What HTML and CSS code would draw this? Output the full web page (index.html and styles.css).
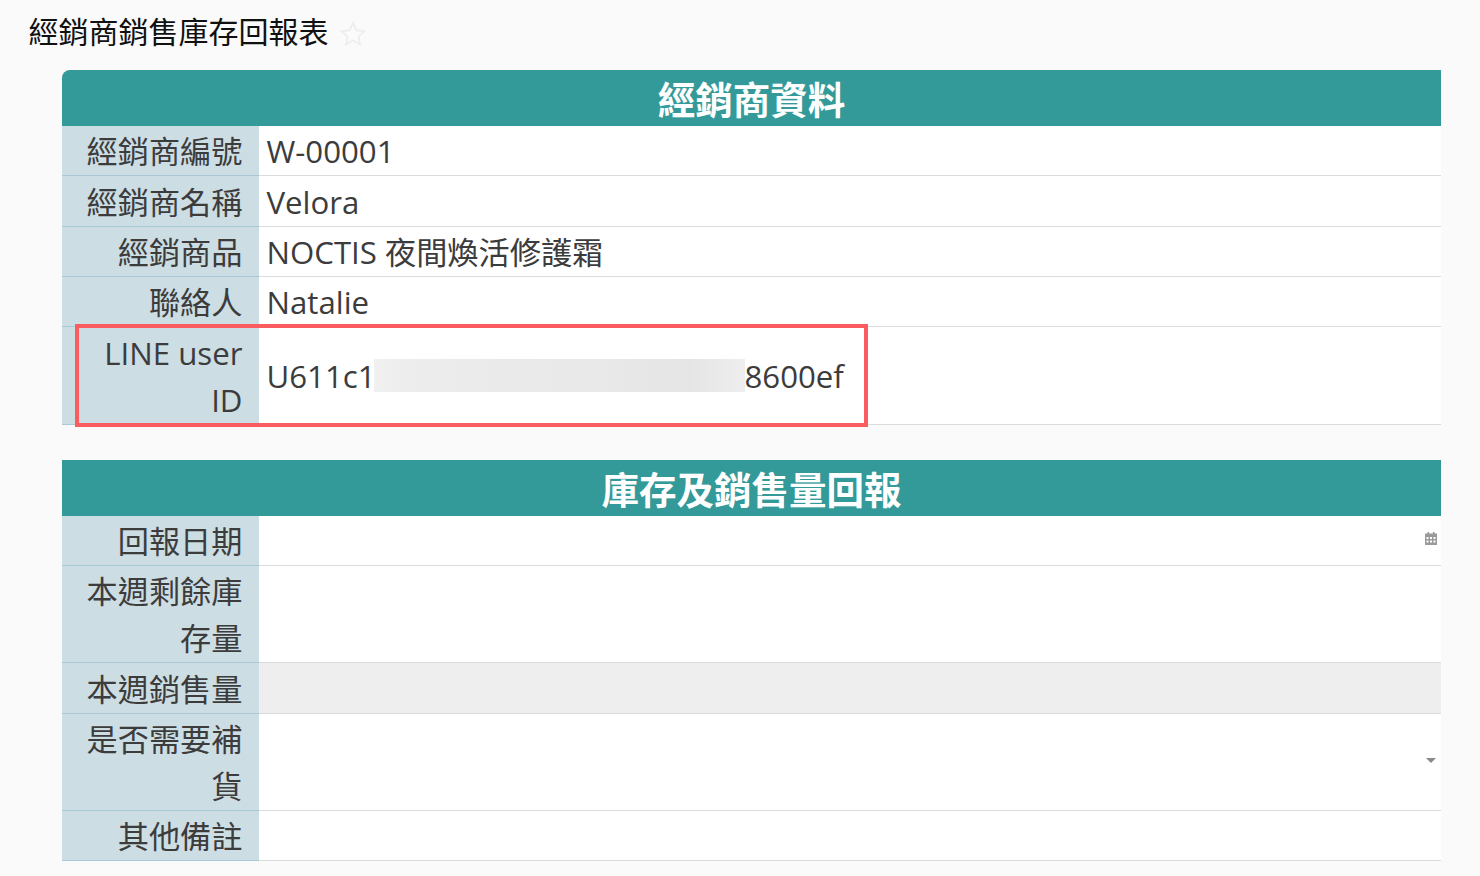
FILE: index.html
```html
<!DOCTYPE html>
<html lang="zh-Hant">
<head>
    <meta charset="UTF-8">
    <title>經銷商銷售庫存回報表</title>
    <link rel="stylesheet" href="styles.css">
</head>
<body>
    <header class="page-title">
        <h1>經銷商銷售庫存回報表</h1>
        <svg class="star" viewBox="0 0 24 24" width="28" height="28" aria-hidden="true">
            <path d="M12 2.6l2.9 6.2 6.8.8-5 4.6 1.3 6.7-6-3.4-6 3.4 1.3-6.7-5-4.6 6.8-.8z"/>
        </svg>
    </header>

    <main class="form">
        <!-- 經銷商資料 -->
        <section class="group group-first">
            <h2 class="group-title">經銷商資料</h2>
            <div class="row">
                <div class="label">經銷商編號</div>
                <div class="value">W-00001</div>
            </div>
            <div class="row">
                <div class="label">經銷商名稱</div>
                <div class="value">Velora</div>
            </div>
            <div class="row">
                <div class="label">經銷商品</div>
                <div class="value">NOCTIS 夜間煥活修護霜</div>
            </div>
            <div class="row">
                <div class="label">聯絡人</div>
                <div class="value">Natalie</div>
            </div>
            <div class="row row-highlight">
                <div class="label">LINE user ID</div>
                <div class="value">U611c1<span class="redacted"></span>8600ef</div>
                <div class="highlight-box"></div>
            </div>
        </section>

        <!-- 庫存及銷售量回報 -->
        <section class="group">
            <h2 class="group-title">庫存及銷售量回報</h2>
            <div class="row">
                <div class="label">回報日期</div>
                <div class="value value-icon">
                    <svg class="calendar" viewBox="0 0 12 13" width="12" height="13" aria-hidden="true">
                        <path d="M2.5 0h1.6v2H2.500zM7.900 0h1.600v2H7.900z"/>
                        <path fill-rule="evenodd" d="M0 1.500h12V13H0zM1.500 5v2h2V5zm3.500 0v2h2V5zm3.500 0v2h2V5zM1.500 8.500v2h2v-2zm3.500 0v2h2v-2zm3.500 0v2h2v-2z"/>
                    </svg>
                </div>
            </div>
            <div class="row">
                <div class="label">本週剩餘庫存量</div>
                <div class="value"></div>
            </div>
            <div class="row">
                <div class="label">本週銷售量</div>
                <div class="value value-disabled"></div>
            </div>
            <div class="row">
                <div class="label">是否需要補貨</div>
                <div class="value value-icon"><span class="caret"></span></div>
            </div>
            <div class="row">
                <div class="label">其他備註</div>
                <div class="value"></div>
            </div>
        </section>
    </main>
</body>
</html>
```

FILE: styles.css
```css
body {
    margin: 0;
    background-color: #fafafa;
    color: #3c3c3c;
    font-family: "Open Sans", "Noto Sans CJK TC", sans-serif;
}
.page-title {
    display: flex;
    align-items: center;
    height: 70.25px;
    padding: 0 0 6px 28.5px;
    box-sizing: border-box;
}
.page-title h1 {
    margin: 0;
    color: #111;
    font-size: 30px;
    font-weight: 400;
    line-height: 40px;
}
.star {
    margin: 4px 0 0 10px;
    fill: #fbfbfb;
    stroke: #eeeeee;
    stroke-width: 1.6;
}
.form {
    margin-left: 62px;
    width: 1379px;
}
.group {
    margin-bottom: 34.95px;
}
.group-title {
    margin: 0;
    height: 56px;
    background-color: #339a99;
    color: #fff;
    font-size: 37.5px;
    font-weight: 700;
    line-height: 60px;
    text-align: center;
}
.group-first .group-title {
    border-radius: 8px 0 0 0;
}
.row {
    display: grid;
    grid-template-columns: 196.5px 1fr;
    position: relative;
}
.label {
    background-color: #cdddE4;
    border-bottom: 1px solid #a9c8d8;
    padding: 2.2px 16px 0;
    font-size: 31.2px;
    line-height: 47px;
    text-align: right;
    box-sizing: border-box;
}
.row-highlight .label {
    padding-top: 3px;
}
.value {
    display: flex;
    align-items: center;
    background-color: #fff;
    border-bottom: 1px solid #dcdcdc;
    padding: 2px 8px 0;
    font-size: 31.2px;
    line-height: 47px;
    white-space: nowrap;
}
.value-disabled {
    background-color: #eeeeee;
}
.value-icon {
    justify-content: flex-end;
    padding-right: 4px;
    padding-bottom: 6px;
}
.redacted {
    display: inline-block;
    width: 371px;
    height: 33px;
    margin: -2px 0 0 -2px;
    background: linear-gradient(90deg, #f1f1f1 0%, #ececec 12%, #eaeaea 35%, #e9e9e9 60%, #e5e5e5 85%, #eeeeee 100%);
}
.highlight-box {
    position: absolute;
    top: -3px;
    left: 13px;
    width: 793px;
    height: 103px;
    box-sizing: border-box;
    border: 4px solid #fb5c5f;
}
.calendar {
    fill: #9a9a9a;
    display: block;
}
.caret {
    width: 0;
    height: 0;
    margin: 2px 1px 0 0;
    border-left: 5px solid transparent;
    border-right: 5px solid transparent;
    border-top: 5px solid #8a8a8a;
}
```
